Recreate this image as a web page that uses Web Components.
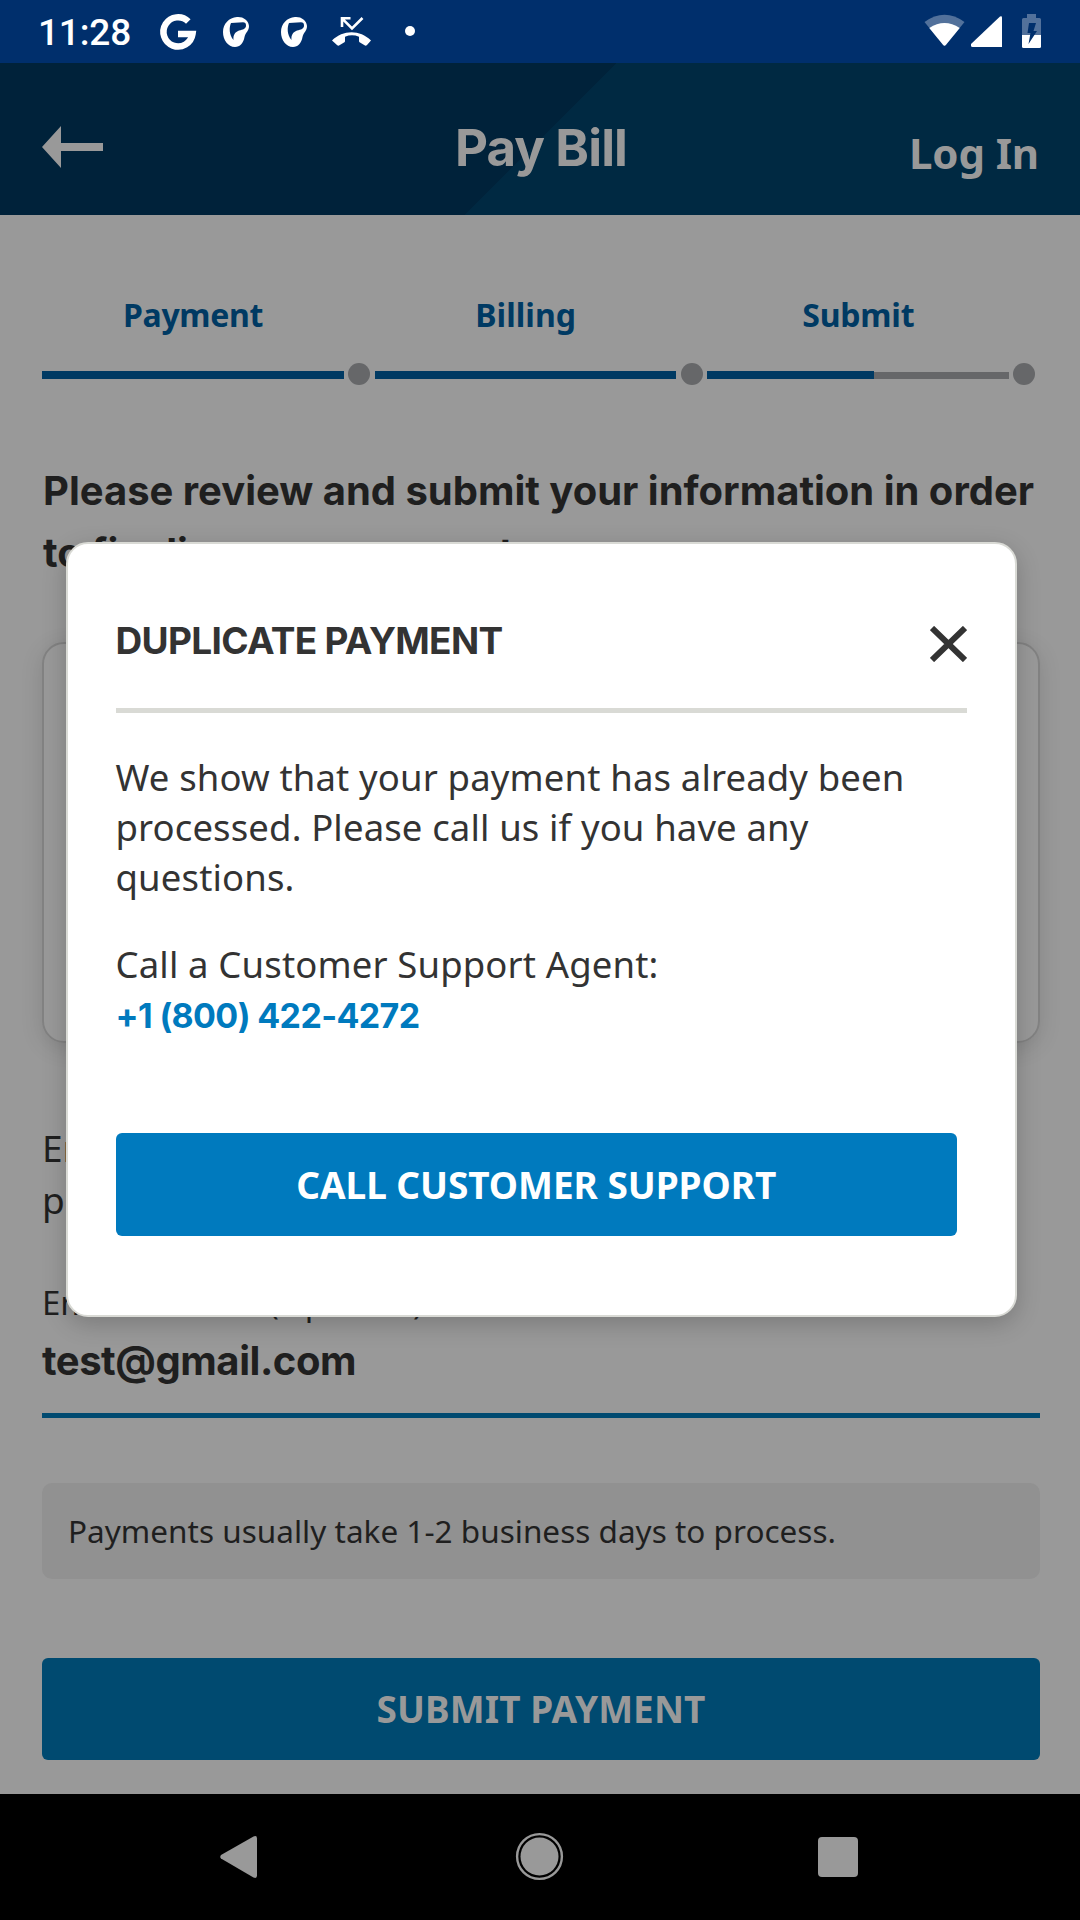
<!DOCTYPE html>
<html lang="en">
<head>
<meta charset="utf-8">
<title>Pay Bill</title>
<style>
html,body{margin:0;padding:0;background:#999}
</style>
</head>
<body>
<pay-app></pay-app>
<script>
const define = (name, html, extra) => {
  const t = document.createElement('template');
  t.innerHTML = html;
  customElements.define(name, class extends HTMLElement {
    constructor() {
      super();
      this.attachShadow({ mode: 'open' }).appendChild(t.content.cloneNode(true));
    }
    connectedCallback() { if (extra) extra(this); }
  });
};

/* A single line of text, tracked so that its advance equals the "w" attribute. */
define('fit-text', `<style>
:host{display:block;white-space:nowrap;flex:none}
span{display:block;width:max-content}
</style><span><slot></slot></span>`, el => {
  const span = el.shadowRoot.querySelector('span');
  const n = el.textContent.length;
  span.style.letterSpacing = '0px';
  const natural = span.getBoundingClientRect().width;
  const ls = (Number(el.getAttribute('w')) - natural) / n;
  span.style.letterSpacing = ls.toFixed(3) + 'px';
});

define('status-bar', `
<style>
:host{display:flex;height:63px;background:#002f6c;color:#fff;padding:0 39px 0 38px;box-sizing:border-box;font:500 37px/66px Roboto,sans-serif;justify-content:space-between}
div{display:flex;align-items:flex-start}
fit-text{width:94px}
svg{display:block;flex:none}
</style>
<div>
<fit-text w="93">11:28</fit-text>
<svg width="288" height="63" viewBox="132 0 288 63" fill="#fff">
  <path d="M188.300 21.500A14.600 14.600 0 1 0 192.500 34H178" fill="none" stroke="#fff" stroke-width="6.500"/>
  <path fill-rule="evenodd" d="M237 17C243 16.500 248.500 20 249 26C249 31 245.500 32.500 244.500 37C243.500 43 240 47 235 47C228 47 223 40 223 32C223 24 229 17.500 237 17ZM231 23C229 27 229 35 233.500 40C233 35 235 32 239 30.500C243 29.500 246 29 246 25.500C246 23.500 245 22.300 243 22.300Z"/>
  <path transform="translate(58 0)" fill-rule="evenodd" d="M237 17C243 16.500 248.500 20 249 26C249 31 245.500 32.500 244.500 37C243.500 43 240 47 235 47C228 47 223 40 223 32C223 24 229 17.500 237 17ZM231 23C229 27 229 35 233.500 40C233 35 235 32 239 30.500C243 29.500 246 29 246 25.500C246 23.500 245 22.300 243 22.300Z"/>
  <path d="M332 40.500C343 29.500 360 29.500 371 40.500L367 45Q366 46 365 45.500L360 42.500Q359 42 359 41V36.700Q352 34 345 36.700V41Q345 42 344 42.500L339 45.500Q338 46 337 45Z"/>
  <path d="M342 27V18.300H350.500M342.500 18.800L352 28.500L362.500 18" fill="none" stroke="#fff" stroke-width="2.600"/>
  <circle cx="410" cy="31" r="5"/>
</svg>
</div>
<div>
<svg width="119" height="63" viewBox="922 0 119 63" fill="#fff">
  <path d="M924.500 22Q944.500 7.500 964.500 22L945.800 45Q944.500 46.500 943.200 45Z" opacity=".32"/>
  <path d="M929.300 28Q944.500 18 959.700 28L945.800 45Q944.500 46.500 943.200 45Z"/>
  <path d="M971 45.500V44L1000 16.500Q1002 15.500 1002 17.500V47H972.500Q971 47 971 45.500Z"/>
  <path d="M1027 14H1036V18H1039.500Q1041 18 1041 19.500V35H1022V19.500Q1022 18 1023.500 18H1027Z" opacity=".32"/>
  <path d="M1022 35H1041V46.500Q1041 48 1039.500 48H1023.500Q1022 48 1022 46.500Z"/>
  <path d="M1029 23H1036L1033.500 31H1037L1028.500 44L1030.500 33H1027.500Z" fill="#002f6c"/>
</svg>
</div>`);

define('app-header', `
<style>
:host{display:grid;grid-template-columns:1fr 175px 1fr;height:152px;padding:0 41px 0 42px;box-sizing:border-box;color:#999;
background:linear-gradient(to right,transparent 616px,#002942 616px),linear-gradient(135deg,#00223a 0 50%,#002942 50.2%) 465px 0/151px 152px no-repeat,#00223a}
svg{display:block;margin-top:63px}
.t{font:700 51px/60px Inter,sans-serif;padding:55px 0 0 2px}
.l{display:flex;justify-content:flex-end;font:700 42px/60px "Noto Sans",sans-serif;padding-top:60px}
</style>
<svg width="61" height="42" viewBox="0 0 61 42"><path d="M0 21L19 0V17H61V25H19V42Z" fill="#999"/></svg>
<fit-text class="t" w="172">Pay Bill</fit-text>
<div class="l"><fit-text w="130">Log In</fit-text></div>`);

define('progress-step', `
<style>
:host{display:block;flex:1;color:#003a63;font:700 32px/40px "Noto Sans",sans-serif}
.lab{display:flex;justify-content:center;width:302px}
.tr{display:flex;margin-top:28px;align-items:flex-start}
.bar{width:301.500px;margin-top:8px;height:8px;background:linear-gradient(to right,#003a63 var(--done,100%),transparent 0),linear-gradient(#999 1px,#666769 1px)}
i{display:block;width:22px;height:22px;border-radius:50%;background:#666769;margin-left:4.500px}
</style>
<div class="lab"><slot></slot></div>
<div class="tr"><div class="bar"></div><i></i></div>`);

define('action-button', `<style>
:host{display:flex;justify-content:center;height:102px;border-radius:6px;background:#004a70;color:#999;font:700 37px/102px "Noto Sans",sans-serif}
</style><slot></slot>`);

define('pay-page', `
<style>
:host{display:block;height:1579px;box-sizing:border-box;padding:80px 40px 0 42px;color:#1f1f1f;background:#999}
.steps{display:flex}
h1{margin:75px 0 0;font:700 40px/62px Inter,sans-serif;padding-left:1px}
.card{height:401px;margin-top:58px;box-sizing:border-box;border:2px solid #828282;border-radius:22px;box-shadow:0 5px 22px rgba(0,0,0,.13)}
.p{margin-top:79px;font:400 37px/51.500px "Noto Sans",sans-serif}
.lb{margin-top:56px;font:400 33px/44px "Noto Sans",sans-serif}
.in{margin-top:6px;padding-bottom:22px;border-bottom:5px solid #004a70;font:700 40px/60px Inter,sans-serif}
.note{margin-top:65px;height:96px;border-radius:10px;background:#919191;font:400 31.500px/96px "Noto Sans",sans-serif;padding-left:26px}
action-button{margin-top:79px}
</style>
<div class="steps">
<progress-step><fit-text w="140">Payment</fit-text></progress-step>
<progress-step><fit-text w="101">Billing</fit-text></progress-step>
<progress-step style="--done:167px"><fit-text w="112">Submit</fit-text></progress-step>
</div>
<h1><fit-text w="991">Please review and submit your information in order</fit-text><fit-text w="484">to finalize your payment.</fit-text></h1>
<div class="card"></div>
<div class="p">Enter your<br>payment</div>
<div class="lb"><fit-text w="381">Email Address (Optional)</fit-text></div>
<div class="in"><fit-text w="314">test@gmail.com</fit-text></div>
<div class="note"><fit-text w="768">Payments usually take 1-2 business days to process.</fit-text></div>
<action-button><fit-text w="329">SUBMIT PAYMENT</fit-text></action-button>`);

define('nav-bar', `
<style>
:host{display:flex;height:126px;background:#000}
svg{display:block}
</style>
<svg width="1080" height="126" viewBox="0 1794 1080 126" fill="#999">
<path d="M221 1855Q219.500 1857 221 1858.500L253.500 1877.500Q257 1879 257 1875.500V1838.500Q257 1835 253.500 1836.500Z"/>
<circle cx="539.500" cy="1856.500" r="22.400" fill="none" stroke="#999" stroke-width="2.400"/>
<circle cx="539.500" cy="1856.500" r="19"/>
<rect x="818" y="1837" width="40" height="40" rx="4"/>
</svg>`);

define('modal-dialog', `
<style>
:host{display:block;box-sizing:border-box;width:951.500px;height:775px;padding:72px 48px 0;border:2px solid #d9dad5;border-radius:22px;background:#fff;color:#333;box-shadow:0 7px 24px rgba(0,0,0,.2)}
.h{display:flex;justify-content:space-between;align-items:flex-start;border-bottom:5px solid #d9dad5;padding-bottom:42px;font:700 37px/50px Inter,sans-serif}
.h svg{display:block;height:36px;margin:10px 0 -10px}
.b{margin-top:39px;font:400 36.500px/50px "Noto Sans",sans-serif}
.c{margin-top:37px}
.ph{margin-top:2px;font:700 34px/50px Inter,sans-serif;color:#007abe}
action-button{margin:92px 10px 0 0;height:103px;line-height:104px;background:#007abe;color:#fff}
</style>
<div class="h"><slot name="title"></slot>
<svg width="37" height="36" viewBox="0 0 37 36"><path d="M2 2L35 34M35 2L2 34" stroke="#333" stroke-width="6"/></svg></div>
<div class="b">
<fit-text w="789">We show that your payment has already been</fit-text>
<fit-text w="693">processed. Please call us if you have any</fit-text>
<fit-text w="179">questions.</fit-text>
<fit-text class="c" w="543">Call a Customer Support Agent:</fit-text>
</div>
<fit-text class="ph" w="304">+1 (800) 422-4272</fit-text>
<action-button><fit-text w="480">CALL CUSTOMER SUPPORT</fit-text></action-button>`);

define('pay-app', `
<style>
:host{display:block;position:relative;width:1080px;height:1920px;overflow:hidden}
modal-dialog{position:absolute;left:65.500px;top:542px}
</style>
<status-bar></status-bar>
<app-header></app-header>
<pay-page></pay-page>
<nav-bar></nav-bar>
<modal-dialog><fit-text slot="title" w="387">DUPLICATE PAYMENT</fit-text></modal-dialog>`);
</script>
</body>
</html>
